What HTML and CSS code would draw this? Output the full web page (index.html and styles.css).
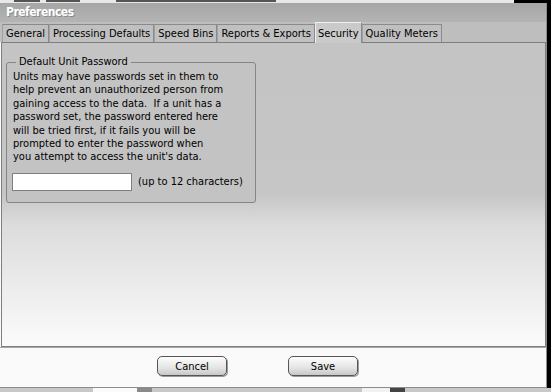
FILE: index.html
```html
<!DOCTYPE html>
<html lang="en">
<head>
    <meta charset="UTF-8">
    <title>Preferences</title>
    <link rel="stylesheet" href="styles.css">
</head>
<body>
    <div class="screen">
        <div class="behind">
            <i class="mark mark-1"></i>
            <i class="mark mark-2"></i>
            <i class="mark mark-3"></i>
        </div>
        <div class="window">
            <div class="titlebar">Preferences</div>
            <div class="tabs">
                <div class="tab">General</div>
                <div class="tab">Processing Defaults</div>
                <div class="tab">Speed Bins</div>
                <div class="tab">Reports &amp; Exports</div>
                <div class="tab tab-active">Security</div>
                <div class="tab">Quality Meters</div>
            </div>
            <div class="panel">
                <fieldset class="group">
                    <legend>Default Unit Password</legend>
                    <p class="group-text">Units may have passwords set in them to<br>
                        help prevent an unauthorized person from<br>
                        gaining access to the data.&nbsp; If a unit has a<br>
                        password set, the password entered here<br>
                        will be tried first, if it fails you will be<br>
                        prompted to enter the password when<br>
                        you attempt to access the unit's data.</p>
                    <div class="field-row">
                        <input type="text" class="field">
                        <span class="hint">(up to 12 characters)</span>
                    </div>
                </fieldset>
            </div>
            <div class="footer">
                <button class="button">Cancel</button>
                <button class="button">Save</button>
            </div>
        </div>
        <div class="taskbar">
            <div class="task task-a"></div>
            <div class="task task-b"></div>
            <div class="task task-c"></div>
            <div class="task task-d"></div>
        </div>
    </div>
</body>
</html>
```
FILE: styles.css
```css
body {
    margin: 0;
    background-color: #000;
    font-family: "DejaVu Sans Condensed", "DejaVu Sans", sans-serif;
    font-stretch: condensed;
    font-size: 11px;
    color: #000;
}
.screen {
    width: 551px;
    height: 392px;
    display: flex;
    flex-direction: column;
    overflow: hidden;
}
.behind {
    height: 3px;
    width: 500px;
    background-color: #e8e8e8;
    display: flex;
    gap: 6px;
    padding-left: 14px;
}
.mark {
    height: 2px;
    background-color: #555;
}
.mark-1 { width: 26px; }
.mark-2 { width: 34px; }
.mark-3 { width: 160px; margin-left: 30px; }
.window {
    width: 546px;
    height: 384px;
    border-right: 1px solid #8c8c8c;
    border-bottom: 1px solid #8c8c8c;
    background-color: #fafafa;
    display: flex;
    flex-direction: column;
}
.titlebar {
    height: 19px;
    background: linear-gradient(#a6a6a6, #b4b4b4);
    color: #fff;
    font-weight: bold;
    font-size: 12px;
    letter-spacing: -0.5px;
    line-height: 18px;
    padding-left: 6px;
    text-shadow: 1px 1px 0 #8a8a8a;
}
.tabs {
    height: 20px;
    background-color: #bebebe;
    display: flex;
    align-items: flex-end;
    padding-left: 2px;
}
.tab {
    height: 18px;
    line-height: 17px;
    padding: 0 3px;
    border: 1px solid #8a8a8a;
    border-bottom: none;
    border-left-color: #a0a0a0;
    background-color: #c0c0c0;
    box-sizing: border-box;
    white-space: nowrap;
}
.tab-active {
    height: 21px;
    line-height: 22px;
    margin-bottom: -1px;
    padding: 0 2px;
    background-color: #cacaca;
    border-color: #f0f0f0 #8a8a8a #8a8a8a #f0f0f0;
    position: relative;
}
.panel {
    height: 305px;
    margin-left: 1px;
    border: 1px solid #7e7e7e;
    background: linear-gradient(#c4c4c4 0%, #c6c6c6 50%, #dcdcdc 60%, #fbfbfb 100%);
    padding: 13px 0 0 4px;
    box-sizing: border-box;
}
.group {
    width: 250px;
    box-sizing: border-box;
    margin: 0;
    padding: 0 5px 11px 5px;
    border: 1px solid #858585;
    border-radius: 3px;
    background-color: #c3c3c3;
}
.group legend {
    padding: 0 3px;
    margin-left: 4px;
    line-height: 12px;
}
.group-text {
    margin: 2px 0 0 1px;
    line-height: 13.4px;
    white-space: nowrap;
}
.field-row {
    display: flex;
    align-items: center;
    margin-top: 9px;
}
.field {
    width: 120px;
    height: 18px;
    box-sizing: border-box;
    border: 1px solid #7f7f7f;
    background-color: #fff;
    margin: 0 6px 0 0;
}
.hint {
    white-space: nowrap;
}
.footer {
    flex: 1;
    display: flex;
    justify-content: center;
    align-items: flex-start;
    gap: 61px;
    padding-top: 8px;
    padding-right: 31px;
    border-top: 1px solid #a9a9a9;
}
.button {
    width: 70px;
    height: 20px;
    font-family: inherit;
    font-stretch: condensed;
    font-size: 11px;
    border: 1px solid #555;
    border-radius: 5px;
    background: linear-gradient(#fdfdfd, #e4e4e4 60%, #c8c8c8);
    box-shadow: 1px 1px 0 #9a9a9a;
    padding: 0;
    cursor: pointer;
}
.taskbar {
    flex: 1;
    display: flex;
    background-color: #c8c8c8;
}
.task {
    height: 100%;
}
.task-a {
    width: 44px;
    margin-left: 93px;
    background-color: #fafafa;
}
.task-b {
    width: 15px;
    background-color: #8a8a8a;
}
.task-c {
    width: 28px;
    margin-left: 210px;
    background-color: #f2f2f2;
}
.task-d {
    width: 15px;
    background-color: #444;
}
```
